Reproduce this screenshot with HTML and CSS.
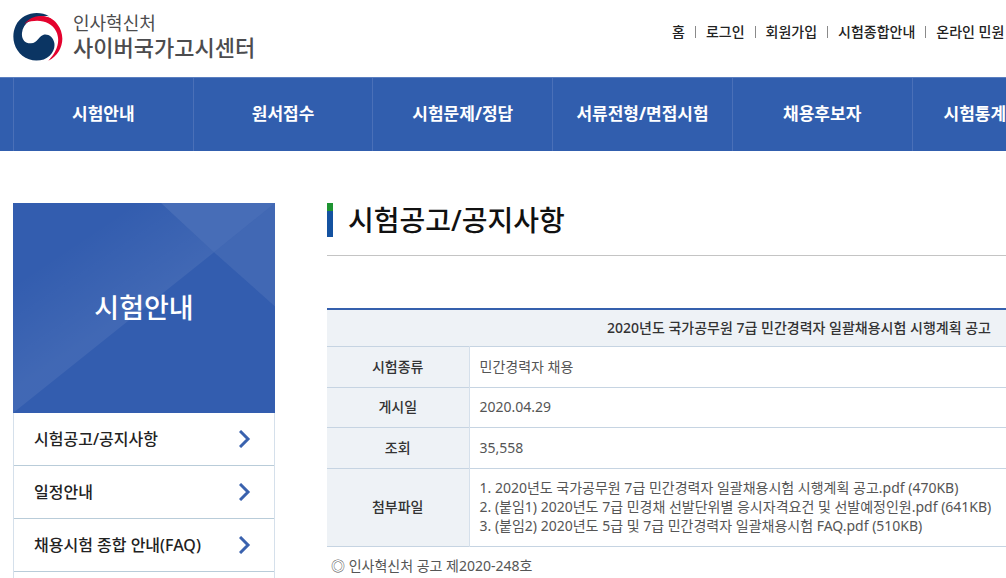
FILE: index.html
```html
<!DOCTYPE html>
<html lang="ko">
<head>
<meta charset="utf-8">
<title>시험공고/공지사항 - 사이버국가고시센터</title>
<link rel="stylesheet" href="styles.css">
</head>
<body>
<header class="header wrap">
  <a class="logo" href="#">
    <svg class="logo-mark" viewBox="0 0 150 144" aria-hidden="true">
      <path fill="#e4032e" d="M36 30C66 2 112 4 132 32C162 70 148 122 106 143C130 118 144 86 130 56C114 24 76 16 36 30Z"/>
      <path fill="#0b3563" d="M108 10C78-8 28-2 8 38C-10 78 8 124 48 139C70 147 96 142 110 128C122 116 126 104 124 90C121 72 106 62 92 65C78 68 74 90 54 91C36 92 25 78 27 60C30 28 66 4 108 10Z"/>
      <path fill="#e4032e" d="M34 34C54 6 92 2 118 20C90 10 60 12 34 34Z"/>
    </svg>
    <span class="logo-text"><span class="logo-org">인사혁신처</span><span class="logo-name">사이버국가고시센터</span></span>
  </a>
  <ul class="util">
    <li><a href="#">홈</a></li>
    <li><a href="#">로그인</a></li>
    <li><a href="#">회원가입</a></li>
    <li><a href="#">시험종합안내</a></li>
    <li><a href="#">온라인 민원</a></li>
  </ul>
</header>
<nav class="gnb">
  <ul class="gnb-list wrap">
    <li><a href="#">시험안내</a></li>
    <li><a href="#">원서접수</a></li>
    <li><a href="#">시험문제/정답</a></li>
    <li><a href="#">서류전형/면접시험</a></li>
    <li><a href="#">채용후보자</a></li>
    <li><a class="gnb-start" href="#">시험통계</a></li>
  </ul>
</nav>
<div class="body wrap">
  <aside class="side">
    <div class="side-banner">
      <svg class="side-art" viewBox="0 0 262 209" preserveAspectRatio="none" aria-hidden="true">
        <defs>
          <linearGradient id="fold" gradientUnits="userSpaceOnUse" x1="60" y1="40" x2="110" y2="115">
            <stop offset="0" stop-color="#fff" stop-opacity="0"/>
            <stop offset="1" stop-color="#fff" stop-opacity=".07"/>
          </linearGradient>
        </defs>
        <path fill="url(#fold)" d="M0 0H148L201 49L0 209Z"/>
        <path fill="#fff" fill-opacity=".1" d="M148 0H262L201 49Z"/>
        <path fill="#fff" fill-opacity=".07" d="M262 0V103L201 49Z"/>
      </svg>
      <h2 class="side-title">시험안내</h2>
    </div>
    <ul class="side-menu">
      <li><a href="#">시험공고/공지사항<svg class="arrow" viewBox="0 0 12 18" aria-hidden="true"><path d="M1 1L9 9L1 17"/></svg></a></li>
      <li><a href="#">일정안내<svg class="arrow" viewBox="0 0 12 18" aria-hidden="true"><path d="M1 1L9 9L1 17"/></svg></a></li>
      <li><a href="#">채용시험 종합 안내(FAQ)<svg class="arrow" viewBox="0 0 12 18" aria-hidden="true"><path d="M1 1L9 9L1 17"/></svg></a></li>
      <li class="side-rest"></li>
    </ul>
  </aside>
  <main class="content">
    <div class="title-row"><h1 class="title">시험공고/공지사항</h1></div>
    <table class="notice">
      <thead>
        <tr><th colspan="2" scope="colgroup">2020년도 국가공무원 7급 민간경력자 일괄채용시험 시행계획 공고</th></tr>
      </thead>
      <tbody>
        <tr><th scope="row">시험종류</th><td>민간경력자 채용</td></tr>
        <tr><th scope="row">게시일</th><td>2020.04.29</td></tr>
        <tr><th scope="row">조회</th><td>35,558</td></tr>
        <tr><th scope="row">첨부파일</th><td class="files">
          <a href="#">1. 2020년도 국가공무원 7급 민간경력자 일괄채용시험 시행계획 공고.pdf (470KB)</a>
          <a href="#">2. (붙임1) 2020년도 7급 민경채 선발단위별 응시자격요건 및 선발예정인원.pdf (641KB)</a>
          <a href="#">3. (붙임2) 2020년도 5급 및 7급 민간경력자 일괄채용시험 FAQ.pdf (510KB)</a>
        </td></tr>
      </tbody>
    </table>
    <p class="note">◎ 인사혁신처 공고 제2020-248호</p>
  </main>
</div>
</body>
</html>
```
FILE: styles.css
```css
* { box-sizing: border-box; }
html { overflow: hidden; }
body {
  margin: 0;
  background: #fff;
  color: #222;
  font-family: "Noto Sans", "Noto Sans CJK KR", sans-serif;
  font-size: 14px;
  line-height: 20px;
}
ul, h1, h2, p { margin: 0; padding: 0; }
ul { list-style: none; }
a { color: inherit; text-decoration: none; }
.wrap { min-width: 1258px; margin-left: 13px; }

.header { display: flex; align-items: center; height: 77px; }
.logo { display: flex; align-items: center; gap: 10px; width: 659px; padding-bottom: 4px; }
.logo-mark { width: 50px; height: 48px; }
.logo-text { display: flex; flex-direction: column; color: #4c4c4e; }
.logo-org { font-size: 18px; line-height: 20px; }
.logo-name { font-size: 22px; line-height: 28px; font-weight: 500; }
.util { display: flex; padding-bottom: 13px; font-weight: 500; white-space: nowrap; }
.util li { display: flex; align-items: center; }
.util li + li::before { content: ""; width: 1px; height: 12px; margin: 0 10px; background: #8a8a8a; }

.gnb { background: #315eae; border-top: 1px solid #5b7fc0; overflow: hidden; }
.gnb-list { display: grid; grid-template-columns: repeat(7, 1fr); }
.gnb-list a {
  display: block;
  height: 73px;
  border-left: 1px solid #4a70b8;
  color: #fff;
  font-size: 17px;
  font-weight: 700;
  line-height: 71px;
  text-align: center;
  white-space: nowrap;
}
.gnb-list .gnb-start { padding-left: 31px; text-align: left; }

.body { display: flex; align-items: flex-start; gap: 52px; padding-top: 52px; }
.side { width: 262px; flex: none; }
.side-banner { display: grid; height: 210px; background: #335daf; }
.side-banner > * { grid-area: 1 / 1; }
.side-art { width: 100%; height: 100%; }
.side-title { place-self: center; color: #fff; font-size: 27px; font-weight: 500; line-height: 36px; }
.side-menu { border: solid #d5e0eb; border-width: 0 1px; }
.side-menu li { border-bottom: 1px solid #b9ccd9; }
.side-menu a {
  display: flex;
  align-items: center;
  justify-content: space-between;
  height: 52px;
  padding: 0 23px 0 20px;
  font-size: 16px;
  font-weight: 500;
}
.side-menu .side-rest { height: 52px; }
.arrow { width: 12px; height: 18px; fill: none; stroke: #3a62ae; stroke-width: 3; }

.content { flex: 1; }
.title-row { height: 53px; border-bottom: 1px solid #c4c4c4; }
.title {
  height: 34px;
  padding-left: 15px;
  border-left: 6px solid;
  border-image: linear-gradient(#1e9432 0 26%, #1452a0 26%) 1;
  color: #111;
  font-size: 28px;
  font-weight: 500;
  line-height: 34px;
}
.notice { width: 100%; margin-top: 52px; border-collapse: collapse; border-top: 2px solid #3560ad; }
.notice th { width: 142px; background: #eef2f6; color: #333; font-weight: 500; text-align: center; }
.notice td { padding: 9px 10px; border-left: 1px solid #d5e0eb; color: #555; }
.notice tr { height: 41px; border-bottom: 1px solid #c6d4e2; }
.notice tr:nth-child(2) { height: 40px; }
.notice thead tr { height: 37px; }
.files a { display: block; line-height: 19px; }
.notice tr:last-child td { padding-bottom: 11px; }
.note { padding: 9px 4px; color: #555; }
```
